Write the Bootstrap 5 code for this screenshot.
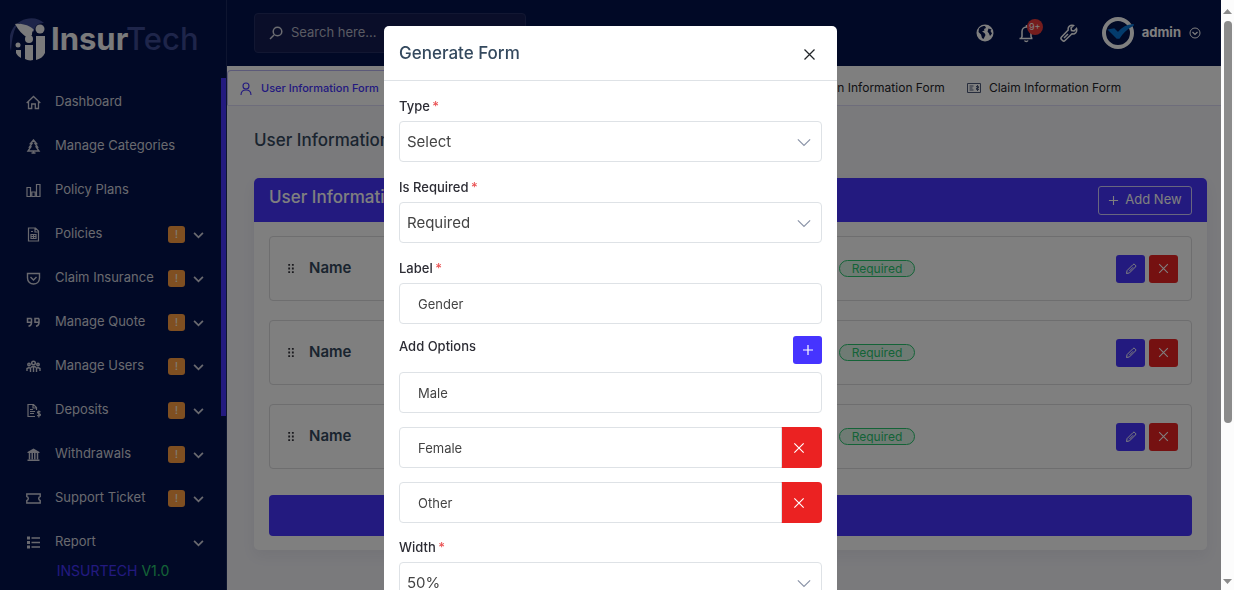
<!DOCTYPE html>
<html lang="en">
<head>
<meta charset="utf-8">
<meta name="viewport" content="width=device-width, initial-scale=1">
<title>InsurTech - User Information Form</title>
<link href="https://cdn.jsdelivr.net/npm/bootstrap@5.3.0/dist/css/bootstrap.min.css" rel="stylesheet">
<style>
:root { --brand: #4634ff; --navy: #03124c; --ink: #34495e; --bar: 13px; }
body { font-family: Inter, "Open Sans", sans-serif; font-size: 13px; color: #34343c; background: #f4f4f9; overflow: hidden; }
svg { display: block; flex: none; fill: none; stroke: currentColor; stroke-width: 1.5; }
.shell { padding-right: var(--bar); }
.side { width: 227px; background: var(--navy); border-right: 1px solid #1c2a60; overflow: hidden; }
.brand { padding: 18px 10px 0; height: 80px; }
.side-link { height: 44px; padding: 0 22px 0 26px; color: #d2d3de; text-decoration: none; font-size: 13px; }
.side-link svg:first-child { margin-right: 14px; }
.warn { width: 17px; height: 17px; border-radius: 3px; background: #ff9f43; color: #fff; font-size: 10px; line-height: 17px; text-align: center; margin: 0 8px 0 auto; }
.side-thumb { position: absolute; right: 0; top: 78px; width: 5px; height: 338px; background: var(--brand); }
.version { position: absolute; left: 0; right: 0; bottom: 7px; line-height: 24px; font-size: 14px; text-align: center; background: var(--navy); color: #28c76f; }
.version span { color: var(--brand); }
.topbar { height: 66px; background: var(--navy); padding: 0 20px 0 27px; }
.search { width: 272px; height: 40px; border: 1px solid #242f64; border-radius: 4px; background: #141d52; padding: 0 14px; color: #d8d9e2; gap: 8px; }
.search input { background: none; border: 0; outline: 0; padding: 0; color: inherit; font-size: 13px; width: 200px; }
.search input::placeholder { color: #b4b6c6; opacity: 1; }
.plain { background: none; border: 0; padding: 0; color: #fff; }
.count { position: absolute; left: 9px; top: -4px; width: 16px; height: 16px; border-radius: 8px; background: #ea3a3a; font-size: 9px; line-height: 16px; text-align: center; }
.tabs { height: 40px; background: #fff; border-bottom: 1px solid #dcdaf6; font-size: 12px; padding-top: 4px; }
.tabs a { color: #24242a; text-decoration: none; gap: 8px; padding: 0 10px 0 12px; white-space: nowrap; }
.tabs a.active { color: var(--brand); border: 1px solid #b9b4f2; border-bottom: 0; border-radius: 4px 4px 0 0; font-size: 11px; font-weight: 500; gap: 9px; }
.tabs .mid { width: 565px; }
.page { padding: 20px 14px 0 27px; }
.page h1 { font-size: 17px; line-height: 28px; font-weight: 500; color: var(--ink); margin-bottom: 24px; }
.panel { border-radius: 5px; background: #fff; box-shadow: 0 6px 14px rgba(40,40,90,.06); }
.panel-top { height: 44px; border-radius: 5px 5px 0 0; background: var(--brand); color: #fff; padding: 0 15px; }
.panel-top h2 { font-size: 17px; line-height: 24px; font-weight: 500; margin: 0 0 6px; }
.add { height: 29px; width: 94px; border: 1px solid #d0ccff; border-radius: 3px; color: #fff; background: none; font-size: 13px; gap: 6px; padding: 0; }
.panel-body { padding: 14px 15px; }
.field { height: 65px; border: 1px solid #dcdcde; border-radius: 4px; padding: 0 13px 0 17px; margin-bottom: 19px; }
.field strong { font-size: 15px; font-weight: 600; color: var(--ink); margin-left: 14px; }
.field-end { width: 339px; }
.pill { width: 76px; height: 17px; line-height: 15px; border: 1px solid #28c76f; border-radius: 9px; background: #dff6e9; color: #28c76f; font-size: 12px; text-align: center; }
.sq { width: 29px; height: 28px; border: 0; border-radius: 3px; color: #fff; padding: 0; display: flex; align-items: center; justify-content: center; }
.fill-brand { background: var(--brand); }
.fill-red { background: #eb2222; }
.submit { height: 41px; border: 0; border-radius: 4px; background: var(--brand); margin-top: 26px; }
.modal, .modal-backdrop { width: calc(100% - var(--bar)); height: 100%; }
.modal { overflow: hidden; }
.modal-dialog { max-width: 453px; margin: 26px auto; }
.modal-content { border: 0; border-radius: 5px; }
.modal-header { height: 55px; padding: 2px 20px 0 15px; }
.modal-title { font-size: 17px; font-weight: 500; color: var(--ink); }
.modal-body { padding: 15px; }
.modal-body .form-label { display: block; font-size: 13px; font-weight: 500; line-height: 20px; margin: 0 0 5px; color: #2c2c34; }
.modal-body .form-label i { color: #ea5455; font-style: normal; margin-left: -1px; }
.modal-body .form-control, .modal-body .form-select { height: 41px; border: 1px solid #dee2e6; border-radius: 4px; color: #444; }
.modal-body .form-control { padding: 0 18px; font-size: 13px; }
.modal-body .form-select { padding: 2px 7px 0; font-size: 15px; background-position: right 10px center; background-size: 14px; background-image: url("data:image/svg+xml,%3csvg xmlns='http://www.w3.org/2000/svg' viewBox='0 0 16 16'%3e%3cpath fill='none' stroke='%238b94a8' stroke-width='1.4' d='m1 5 7 7 7-7'/%3e%3c/svg%3e"); }
.gap-block { margin-bottom: 15px; }
.options-top { margin-top: 12px; }
.options { gap: 14px; margin: 8px 0 14px; }
.modal-body .input-group > .form-control { border-radius: 4px 0 0 4px; }
.cut { width: 41px; border: 0; border-radius: 0 4px 4px 0; color: #fff; padding: 0 0 0 11px; }
.scroll-strip { position: fixed; right: 0; top: 0; bottom: 0; width: var(--bar); background: #fcfcfc; color: #8b8b8b; padding: 9px 0 6px; }
.scroll-strip svg { fill: currentColor; stroke: none; }
.scroll-strip div { width: 8px; height: 402px; border-radius: 4px; background: #8b8b8b; margin-top: 7px; }
</style>
</head>
<body>
<svg width="0" height="0" class="position-absolute" aria-hidden="true"><defs>
<symbol id="x" viewBox="0 0 12 12"><path d="m2 2 8 8m0-8-8 8" stroke-width="1"/></symbol>
<symbol id="plus" viewBox="0 0 12 12"><path d="M6 1v10M1 6h10" stroke-width="1.2"/></symbol>
<symbol id="down" viewBox="0 0 10 10"><path d="m1 3.500 4 4 4-4" stroke-width="1.6"/></symbol>
<symbol id="pen" viewBox="0 0 12 12"><path d="m1.500 10.500.6-3L8 1.600a1.300 1.300 0 0 1 1.900 0l.5.5a1.300 1.300 0 0 1 0 1.900L4.500 9.900zM4.300 8.200l3.700-3.900" stroke-width="1"/></symbol>
<symbol id="grip" viewBox="0 0 8 12"><path d="M1 1h2v2H1zM5 1h2v2H5zM1 5h2v2H1zM5 5h2v2H5zM1 9h2v2H1zM5 9h2v2H5z" fill="currentColor" stroke="none"/></symbol>
</defs></svg>

<div class="shell d-flex vh-100">
  <aside class="side position-relative flex-shrink-0">
    <div class="brand">
      <svg width="192" height="44" viewBox="0 0 192 44" role="img" aria-label="InsurTech" stroke="none">
        <g stroke="none"><path d="M1 33C-3 20 1 8 11 3c7-4 17-4 23 2-8 0-10 5-10 9L9 5C3 11 2 22 1 33z" fill="#3c4a94"/>
        <path d="M5 6c6-1 15 1 19 6-2 1-2 3-2 5l-4 3C13 17 8 12 5 6z" fill="#f4f4f6"/></g>
        <g fill="#f4f4f6" stroke="none"><circle cx="30" cy="11" r="4.500"/><circle cx="19" cy="21" r="4"/><circle cx="8" cy="27" r="2.500"/><path d="M26 18h9v17c-2 4-5 6-9 7V22zM15 27h8v15c-3 1-6 0-8-1zM6 32h5v8c-2-1-4-3-5-5z"/></g>
        <g font-family="Inter, sans-serif" font-size="31" stroke="none"><text x="41" y="32" font-weight="700" fill="#f4f4f6">Insur</text><text x="116" y="32" font-weight="500" fill="#3c4a94">Tech</text></g>
      </svg>
    </div>
    <nav>
      <a href="#" class="side-link d-flex align-items-center"><svg width="15" height="15" viewBox="0 0 15 15"><path d="M.7 8 7.500 1.500 14.300 8M2.500 6.500v7h3.200V9h3.600v4.500h3.200v-7" stroke-width="1.300"/></svg>Dashboard</a>
      <a href="#" class="side-link d-flex align-items-center"><svg width="15" height="15" viewBox="0 0 15 15"><path d="M7.500 1 4.500 4.500H6L3.500 8h1.300L2 12h11l-2.800-4h1.300L9 4.500h1.500zM7.500 12v2M5.500 14h4" stroke-width="1.400"/></svg>Manage Categories</a>
      <a href="#" class="side-link d-flex align-items-center"><svg width="15" height="15" viewBox="0 0 15 15"><path d="M1 4.500h3.500v9H1zM5.800 9h3.400v4.500H5.800zM10.500 1.500H14v12h-3.500z" stroke-width="1.200"/></svg>Policy Plans</a>
      <a href="#" class="side-link d-flex align-items-center"><svg width="15" height="15" viewBox="0 0 15 15"><path d="M2.500 1h7l3 3v10h-10zM9 1v4h3.500M5 4.500h2M5 7v4.500h5V7.500H5M5 9.500h5M7.500 7.500v4" stroke-width="1.200"/></svg>Policies<span class="warn">!</span><svg width="11" height="11"><use href="#down"/></svg></a>
      <a href="#" class="side-link d-flex align-items-center"><svg width="15" height="15" viewBox="0 0 15 15"><path d="M1.500 2.500h12v4.500c0 8-12 8-12 0zM4.500 6l3 3 3-3" stroke-width="1.400"/></svg>Claim Insurance<span class="warn">!</span><svg width="11" height="11"><use href="#down"/></svg></a>
      <a href="#" class="side-link d-flex align-items-center"><svg width="15" height="15" viewBox="0 0 15 15"><path d="M5.500 3.500v4.200c0 2-1 3-3 3.500M5.500 3.500h-4v3.700h4M13 3.500v4.200c0 2-1 3-3 3.500M13 3.500H9v3.700h4" stroke-width="1.500"/></svg>Manage Quote<span class="warn">!</span><svg width="11" height="11"><use href="#down"/></svg></a>
      <a href="#" class="side-link d-flex align-items-center"><svg width="15" height="15" viewBox="0 0 15 15"><circle cx="7.500" cy="4" r="1.800"/><circle cx="3" cy="5.500" r="1.200"/><circle cx="12" cy="5.500" r="1.200"/><path d="M4.500 13V9c1-2 5-2 6 0v4M7.500 8v5M1 12V9.500l2-1 1.500 1M14 12V9.500l-2-1-1.500 1" stroke-width="1.400"/></svg>Manage Users<span class="warn">!</span><svg width="11" height="11"><use href="#down"/></svg></a>
      <a href="#" class="side-link d-flex align-items-center"><svg width="15" height="15" viewBox="0 0 15 15"><path d="M9 13.500H2V1.500h5.500l3 3V7M7 1.500V5h3.500M4 6.500h3M4 8.500h5M4 10.500h4M14.500 9c-3-1.500-4 1-1.500 1.700s1.500 3-2 1.800M12.800 7.500v7" stroke-width="1.200"/></svg>Deposits<span class="warn">!</span><svg width="11" height="11"><use href="#down"/></svg></a>
      <a href="#" class="side-link d-flex align-items-center"><svg width="15" height="15" viewBox="0 0 15 15"><path d="m1.500 5 6-3.500 6 3.500v1h-12zM1.500 12.500h12V14h-12z" fill="currentColor" stroke="none"/><path d="M3.500 6v6.500M6.200 6v6.500M8.800 6v6.500M11.500 6v6.500"/></svg>Withdrawals<span class="warn">!</span><svg width="11" height="11"><use href="#down"/></svg></a>
      <a href="#" class="side-link d-flex align-items-center"><svg width="15" height="15" viewBox="0 0 15 15"><path d="M.8 3h13.400v2.500c-2 .5-2 3.500 0 4V12H.8V9.500c2-.5 2-3.500 0-4z" stroke-width="1.400"/></svg>Support Ticket<span class="warn">!</span><svg width="11" height="11"><use href="#down"/></svg></a>
      <a href="#" class="side-link d-flex align-items-center"><svg width="15" height="15" viewBox="0 0 15 15"><path d="M1 3h3M1 7.500h3M1 12h3" stroke-width="3"/><path d="M5.500 3H14M5.500 7.500H14M5.500 12H14"/></svg>Report<svg class="ms-auto" width="11" height="11"><use href="#down"/></svg></a>
    </nav>
    <div class="version"><span>INSURTECH</span> V1.0</div>
    <div class="side-thumb"></div>
  </aside>

  <div class="flex-fill d-flex flex-column">
    <header class="topbar d-flex align-items-center justify-content-between">
      <label class="search d-flex align-items-center">
        <svg width="14" height="14" viewBox="0 0 14 14"><circle cx="8.500" cy="5.500" r="4.300"/><path d="M5 9 1 13"/></svg>
        <input type="search" placeholder="Search here..." aria-label="Search">
      </label>
      <div class="d-flex align-items-center">
        <button class="plain me-4" aria-label="Website"><svg width="18" height="18" viewBox="0 0 18 18"><circle cx="9" cy="9" r="8.500" fill="#fff" stroke="none"/><path d="M3 4.500c2-2 4-2.500 6-2.500l1 2-2 1 .5 1.500-2.500 1 2.500 1.500 1 2-2 4-1.500-1-1-3.500-2.500-2.500zM12.500 4.500l3 1-1 1.500 1.500 2.500-2 2.500-1-2.500-1.500-2z" fill="#03124c" stroke="none"/></svg></button>
        <button class="plain position-relative me-4" aria-label="Notifications"><svg width="18" height="20" viewBox="0 0 18 20"><path d="M1.500 15.500h13M3 15.500l1-2v-5a4.500 4.500 0 0 1 9 0v5l1 2M6.500 17.500a2 2 0 0 0 3.500 0M8.500 4V2"/></svg><span class="count">9+</span></button>
        <button class="plain me-4" aria-label="Settings"><svg width="18" height="18" viewBox="0 0 18 18"><path d="M16.500 4.500 14 7l-2.500-.5L11 4l2.500-2.500c-3-1-6 1-5.300 4.500L1.500 13a1.800 1.800 0 0 0 0 2.500l1 1a1.800 1.800 0 0 0 2.500 0L12 9.800c3 .7 5.500-2 4.500-5.300zM4 14l4-4"/></svg></button>
        <button class="plain d-flex align-items-center" aria-label="Account">
          <svg width="32" height="32" viewBox="0 0 32 32"><circle cx="16" cy="16" r="14" stroke="#fff" stroke-width="4"/><path d="m7 13 5-1 4 4c4-5 8-8 15-8-7 4-11 8-14 13h-2z" fill="#0877d8" stroke="#0877d8"/></svg>
          <span class="fw-bold ms-2 me-2">admin</span>
          <svg width="12" height="12" viewBox="0 0 12 12"><circle cx="6" cy="6" r="5" stroke-width="1"/><path d="m3.500 5 2.500 2.500L8.500 5" stroke-width="1.200"/></svg>
        </button>
      </div>
    </header>

    <nav class="tabs d-flex">
      <a href="#" class="active d-flex align-items-center"><svg width="12" height="13" viewBox="0 0 12 13"><circle cx="6" cy="4" r="3" stroke-width="1.100"/><path d="M1 13c0-3.500 2-5 5-5s5 1.500 5 5" stroke-width="1.100"/></svg>User Information Form</a>
      <a href="#" class="mid d-flex align-items-center justify-content-end">Citizen Information Form</a>
      <a href="#" class="d-flex align-items-center"><svg width="14" height="10" viewBox="0 0 14 10"><path d="M.5.5h13v9H.5zM2.500 3h4M2.500 5h3M2.500 7h4M10.500 2v6M9 3.500h2.500v1.500H9.500v1.500H12" stroke-width="1" stroke="#4f5b7a"/></svg>Claim Information Form</a>
    </nav>

    <main class="page">
      <h1>User Information</h1>
      <section class="panel">
        <div class="panel-top d-flex align-items-center justify-content-between">
          <h2>User Information</h2>
          <button class="add d-flex align-items-center justify-content-center"><svg width="11" height="11"><use href="#plus"/></svg>Add New</button>
        </div>
        <div class="panel-body">
          <div class="field d-flex align-items-center"><svg width="8" height="11"><use href="#grip"/></svg><strong>Name</strong>
            <div class="field-end d-flex align-items-center gap-1 ms-auto"><span class="pill me-auto">Required</span><button class="sq fill-brand" aria-label="Edit"><svg width="12" height="12"><use href="#pen"/></svg></button><button class="sq fill-red" aria-label="Remove"><svg width="13" height="13"><use href="#x"/></svg></button></div></div>
          <div class="field d-flex align-items-center"><svg width="8" height="11"><use href="#grip"/></svg><strong>Name</strong>
            <div class="field-end d-flex align-items-center gap-1 ms-auto"><span class="pill me-auto">Required</span><button class="sq fill-brand" aria-label="Edit"><svg width="12" height="12"><use href="#pen"/></svg></button><button class="sq fill-red" aria-label="Remove"><svg width="13" height="13"><use href="#x"/></svg></button></div></div>
          <div class="field d-flex align-items-center mb-0"><svg width="8" height="11"><use href="#grip"/></svg><strong>Name</strong>
            <div class="field-end d-flex align-items-center gap-1 ms-auto"><span class="pill me-auto">Required</span><button class="sq fill-brand" aria-label="Edit"><svg width="12" height="12"><use href="#pen"/></svg></button><button class="sq fill-red" aria-label="Remove"><svg width="13" height="13"><use href="#x"/></svg></button></div></div>
          <button class="submit d-block w-100" aria-label="Submit"></button>
        </div>
      </section>
    </main>
  </div>
</div>

<div class="modal-backdrop show"></div>
<div class="modal d-block" tabindex="-1" role="dialog" aria-labelledby="formTitle">
  <div class="modal-dialog">
    <div class="modal-content">
      <div class="modal-header">
        <h5 class="modal-title" id="formTitle">Generate Form</h5>
        <button class="plain text-dark" aria-label="Close"><svg width="15" height="15"><use href="#x"/></svg></button>
      </div>
      <form class="modal-body">
        <label class="form-label" for="type">Type <i>*</i></label>
        <select class="form-select gap-block" id="type"><option>Select</option></select>
        <label class="form-label" for="req">Is Required <i>*</i></label>
        <select class="form-select gap-block" id="req"><option>Required</option></select>
        <label class="form-label" for="label">Label <i>*</i></label>
        <input class="form-control" id="label" value="Gender">
        <div class="options-top d-flex justify-content-between align-items-start">
          <label class="form-label" for="opt1">Add Options</label>
          <button type="button" class="sq fill-brand" aria-label="Add option"><svg width="12" height="12"><use href="#plus"/></svg></button>
        </div>
        <div class="options d-flex flex-column">
          <input class="form-control" id="opt1" value="Male">
          <div class="input-group"><input class="form-control" aria-label="Option 2" value="Female"><button type="button" class="cut fill-red" aria-label="Remove option"><svg width="14" height="14"><use href="#x"/></svg></button></div>
          <div class="input-group"><input class="form-control" aria-label="Option 3" value="Other"><button type="button" class="cut fill-red" aria-label="Remove option"><svg width="14" height="14"><use href="#x"/></svg></button></div>
        </div>
        <label class="form-label" for="width">Width <i>*</i></label>
        <select class="form-select" id="width"><option>50%</option></select>
      </form>
    </div>
  </div>
</div>
<div class="scroll-strip d-flex flex-column align-items-center" aria-hidden="true"><svg width="9" height="5"><path d="M4.500 0 9 5H0z"/></svg><div></div><svg class="mt-auto" width="9" height="5"><path d="M0 0h9L4.500 5z"/></svg></div>
<script src="https://cdn.jsdelivr.net/npm/bootstrap@5.3.0/dist/js/bootstrap.bundle.min.js"></script>
</body>
</html>
